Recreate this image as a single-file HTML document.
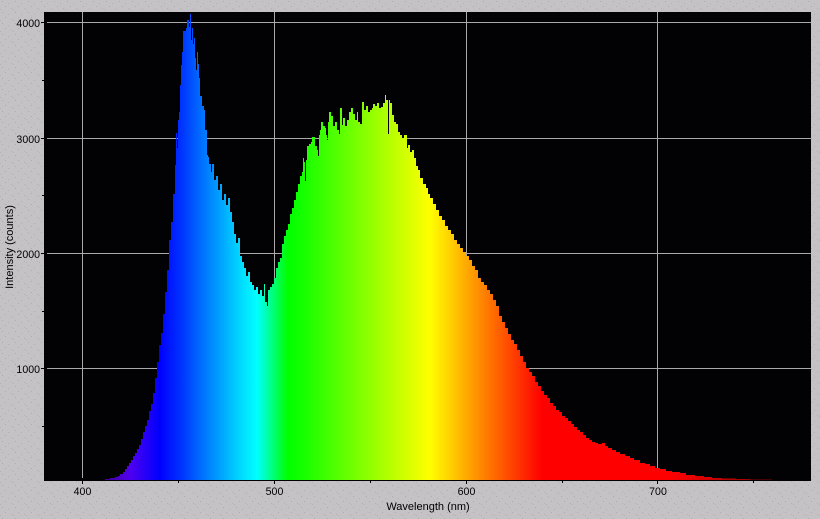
<!DOCTYPE html>
<html><head><meta charset="utf-8">
<style>
html,body{margin:0;padding:0;background:#c4c2c4;width:820px;height:519px;overflow:hidden}
svg{display:block}
text{font-family:"Liberation Sans",sans-serif;font-size:11px;fill:#000}
.n{font-size:10.6px}
</style></head>
<body>
<svg width="820" height="519" viewBox="0 0 820 519" xmlns="http://www.w3.org/2000/svg">
<defs>
<pattern id="d" width="13" height="11" patternUnits="userSpaceOnUse">
<rect x="2" y="1" width="1" height="1" fill="#aeacae"/>
<rect x="8" y="3" width="1" height="1" fill="#b2b0b2"/>
<rect x="5" y="6" width="1" height="1" fill="#aeacae"/>
<rect x="11" y="8" width="1" height="1" fill="#b2b0b2"/>
<rect x="0" y="9" width="1" height="1" fill="#b4b2b4"/>
</pattern>
<linearGradient id="s" gradientUnits="userSpaceOnUse" x1="100" y1="0" x2="780" y2="0">
<stop offset="0" stop-color="#400080"/>
<stop offset="0.044" stop-color="#5000f0"/>
<stop offset="0.088" stop-color="#0000ff"/>
<stop offset="0.118" stop-color="#0030ff"/>
<stop offset="0.154" stop-color="#0078ff"/>
<stop offset="0.206" stop-color="#00d8ff"/>
<stop offset="0.231" stop-color="#00ffff"/>
<stop offset="0.25" stop-color="#00ff90"/>
<stop offset="0.276" stop-color="#00ff00"/>
<stop offset="0.294" stop-color="#10ff00"/>
<stop offset="0.485" stop-color="#ffff00"/>
<stop offset="0.515" stop-color="#ffd000"/>
<stop offset="0.565" stop-color="#ff8000"/>
<stop offset="0.65" stop-color="#ff0000"/>
<stop offset="0.84" stop-color="#ff0000"/>
<stop offset="0.9" stop-color="#d00000"/>
<stop offset="1" stop-color="#780000"/>
</linearGradient>
</defs>
<rect width="820" height="519" fill="url(#d)"/>
<rect x="44" y="12" width="767" height="468" fill="#020204"/>
<g stroke="#a9a9a9" stroke-width="1" shape-rendering="crispEdges">
<path d="M47 22.5H811M47 138.5H811M47 253.5H811M47 368.5H811"/>
<path d="M82.5 12V478M274.5 12V478M466.5 12V478M657.5 12V478"/>
</g>
<path shape-rendering="crispEdges" fill="url(#s)" d="M105 480V479H110V478H115V477H118V476H120V474H123V472H125V469H127V466H129V463H131V460H133V456H135V453H137V449H139V445H141V439H143V432H145V426H147V420H149V411H151V404H153V393H155V378H157V362H159V345H161V333H163V314H165V292H167V270H169V240H171V222H173V194H175V165H176V133H177V148H178V120H179V112H180V85H181V65H182V52H183V31H186V28H187V20H189V27H190V14H191V40H192V28H193V44H194V38H195V58H196V70H197V52H198V64H199V78H200V96H202V106H204V110H205V130H207V155H208V157H209V164H211V172H212V164H214V180H216V176H218V190H220V184H222V200H224V194H226V205H228V198H230V212H232V222H234V234H236V243H238V238H240V256H242V262H244V268H246V276H248V272H250V282H252V285H254V290H256V287H258V294H260V290H262V296H264V284H265V302H267V306H268V290H270V287H272V284H274V278H276V268H278V262H280V258H282V244H284V236H286V230H288V224H290V214H292V208H294V200H296V192H298V184H300V176H302V172H303V158H304V162H305V181H306V160H307V146H309V144H311V142H312V137H315V146H317V150H318V156H319V135H320V130H321V122H323V126H325V128H326V135H327V140H328V122H329V112H331V116H333V126H335V122H337V130H339V134H340V108H342V125H343V118H345V126H347V120H349V112H351V108H353V114H355V120H357V112H358V122H360V124H362V102H364V110H366V106H368V112H370V110H372V108H373V104H375V106H377V103H379V108H381V107H383V103H385V95H386V100H388V134H389V100H390V103H392V115H394V122H396V124H398V132H400V135H402V138H404V135H407V148H408V145H410V152H412V150H414V158H416V166H418V170H420V178H423V184H426V188H428V194H430V198H433V204H436V210H439V216H442V220H445V226H448V230H451V234H454V240H457V244H460V248H463V252H466V256H469V260H472V266H475V270H478V278H481V282H484V285H487V290H490V294H493V300H496V306H499V316H502V322H505V328H508V334H511V340H514V344H517V350H520V356H523V362H526V368H529V372H532V376H535V382H538V386H541V391H544V395H547V398H550V403H553V406H556V410H559V412H562V416H565V418H568V421H571V424H574V427H577V430H580V432H583V435H586V438H589V440H592V442H595V443H598V444H602V443H605V446H608V448H612V450H616V452H620V454H625V456H630V458H634V460H640V463H645V464H650V466H655V468H660V469H666V471H672V472H680V473H686V475H695V476H704V477H712V478H722V478.5H736V479H750V479.5H772V480H105Z"/>
<path d="M44 480.5H811" stroke="#000" stroke-width="1.4" shape-rendering="crispEdges"/>
<path stroke="#000" stroke-width="1" shape-rendering="crispEdges" fill="none" d="M41 22.5H44M42 80.5H44M41 138.5H44M42 195.5H44M41 253.5H44M42 311.5H44M41 368.5H44M42 426.5H44M82.5 481V484M178.5 481V483M274.5 481V484M370.5 481V483M466.5 481V484M562.5 481V483M657.5 481V484M753.5 481V483"/>
<g text-anchor="end" class="n">
<text class="n" x="40" y="27">4000</text>
<text class="n" x="40" y="143">3000</text>
<text class="n" x="40" y="258">2000</text>
<text class="n" x="40" y="373">1000</text>
</g>
<g text-anchor="middle">
<text class="n" x="82.5" y="495">400</text>
<text class="n" x="274.5" y="495">500</text>
<text class="n" x="466.5" y="495">600</text>
<text class="n" x="658" y="495">700</text>
<text x="428" y="510">Wavelength (nm)</text>
<text transform="translate(13 247) rotate(-90)">Intensity (counts)</text>
</g>
</svg>
</body></html>
